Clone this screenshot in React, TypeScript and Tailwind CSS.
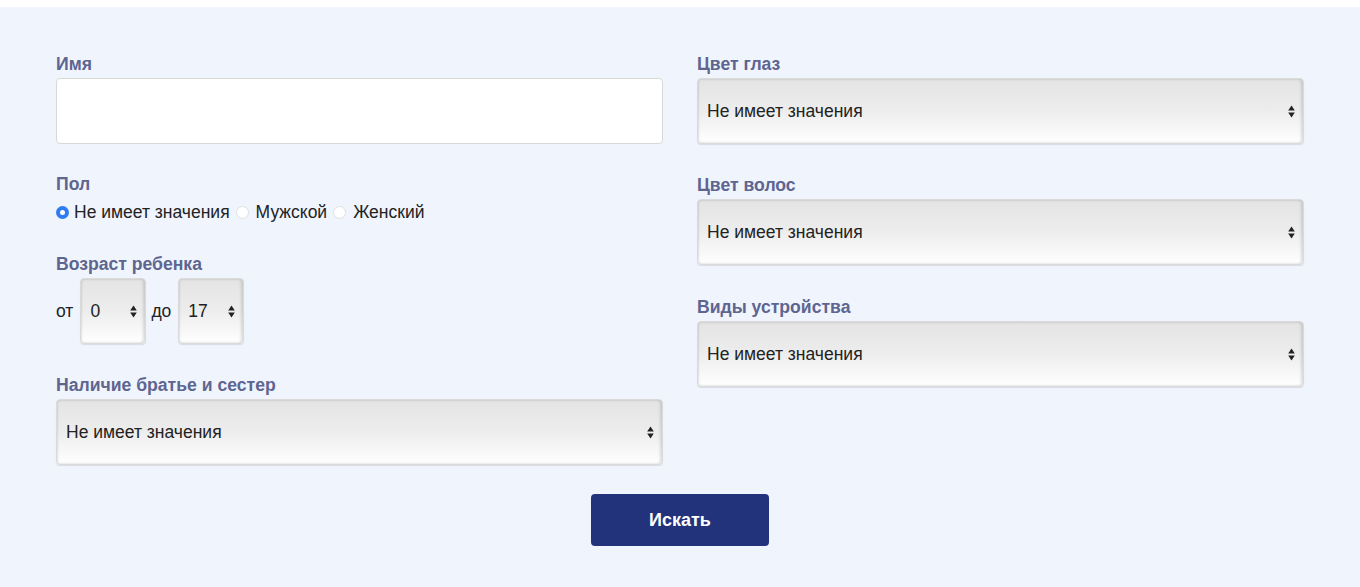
import React from "react";

const font = { fontFamily: '"Liberation Sans", Arial, sans-serif' };

function Arrows() {
  return (
    <svg width="7" height="13" viewBox="0 0 7 13" className="shrink-0">
      <path d="M3.5 0.5 L6.8 5.5 L0.2 5.5 Z" fill="#222" />
      <path d="M3.5 12.5 L6.8 7.5 L0.2 7.5 Z" fill="#222" />
    </svg>
  );
}

function FakeSelect({ value, className = "" }: { value: string; className?: string }) {
  return (
    <div
      className={
        "flex items-center justify-between h-[66px] rounded-[4px] bg-gradient-to-b from-[#e4e4e4] via-[#ededed] to-white shadow-[inset_1px_0_2px_rgba(0,0,0,0.10),inset_-2px_0_3px_rgba(0,0,0,0.13),0_1px_1px_rgba(0,0,0,0.10)] border border-[#dadada] pl-[9px] pr-[8px] text-[17.5px] text-[#222] " +
        className
      }
    >
      <span>{value}</span>
      <Arrows />
    </div>
  );
}

function Label({ children }: { children: React.ReactNode }) {
  return <div className="text-[17.6px] font-bold text-[#5d6590] leading-[20px] mb-[4px]">{children}</div>;
}

function Radio({ checked }: { checked?: boolean }) {
  return checked ? (
    <span className="inline-block w-[13px] h-[13px] rounded-full bg-[#2f7bf2] relative shrink-0">
      <span className="absolute left-[4px] top-[4px] w-[5px] h-[5px] rounded-full bg-white" />
    </span>
  ) : (
    <span className="inline-block w-[13px] h-[13px] rounded-full bg-white border border-[#e0e0e0] shrink-0" />
  );
}

export default function App() {
  return (
    <div style={font} className="w-[1360px] h-[587px] bg-[#f0f4fd] overflow-hidden">
      <div className="h-[7px] bg-white" />
      <div className="px-[56px] pt-[47px]">
        <div className="grid grid-cols-2 gap-x-[34px]">
          <div className="flex flex-col">
            <div>
              <Label>Имя</Label>
              <div className="h-[66px] rounded-[4px] bg-white border border-[#d8d8d8]" />
            </div>
            <div className="mt-[30px]">
              <Label>Пол</Label>
              <div className="flex items-center text-[17.5px] text-[#222] leading-[20px] mt-[8px]">
                <Radio checked />
                <span className="ml-[5px]">Не имеет значения</span>
                <span className="ml-[6px] flex"><Radio /></span>
                <span className="ml-[7px]">Мужской</span>
                <span className="ml-[6px] flex"><Radio /></span>
                <span className="ml-[7px]">Женский</span>
              </div>
            </div>
            <div className="mt-[32px]">
              <Label>Возраст ребенка</Label>
              <div className="flex items-center text-[17.5px] text-[#222] mt-[1px]">
                <span className="mr-[7px]">от</span>
                <FakeSelect value="0" className="w-[66px]" />
                <span className="ml-[5px] mr-[7px]">до</span>
                <FakeSelect value="17" className="w-[66px]" />
              </div>
            </div>
            <div className="mt-[31px]">
              <Label>Наличие братье и сестер</Label>
              <FakeSelect value="Не имеет значения" />
            </div>
          </div>
          <div className="flex flex-col">
            <div>
              <Label>Цвет глаз</Label>
              <FakeSelect value="Не имеет значения" />
            </div>
            <div className="mt-[31px]">
              <Label>Цвет волос</Label>
              <FakeSelect value="Не имеет значения" />
            </div>
            <div className="mt-[32px]">
              <Label>Виды устройства</Label>
              <FakeSelect value="Не имеет значения" />
            </div>
          </div>
        </div>
        <div className="flex justify-center mt-[29px]">
          <button className="w-[178px] h-[52px] rounded-[4px] bg-[#22337b] text-white font-bold text-[18px]">
            Искать
          </button>
        </div>
      </div>
    </div>
  );
}
